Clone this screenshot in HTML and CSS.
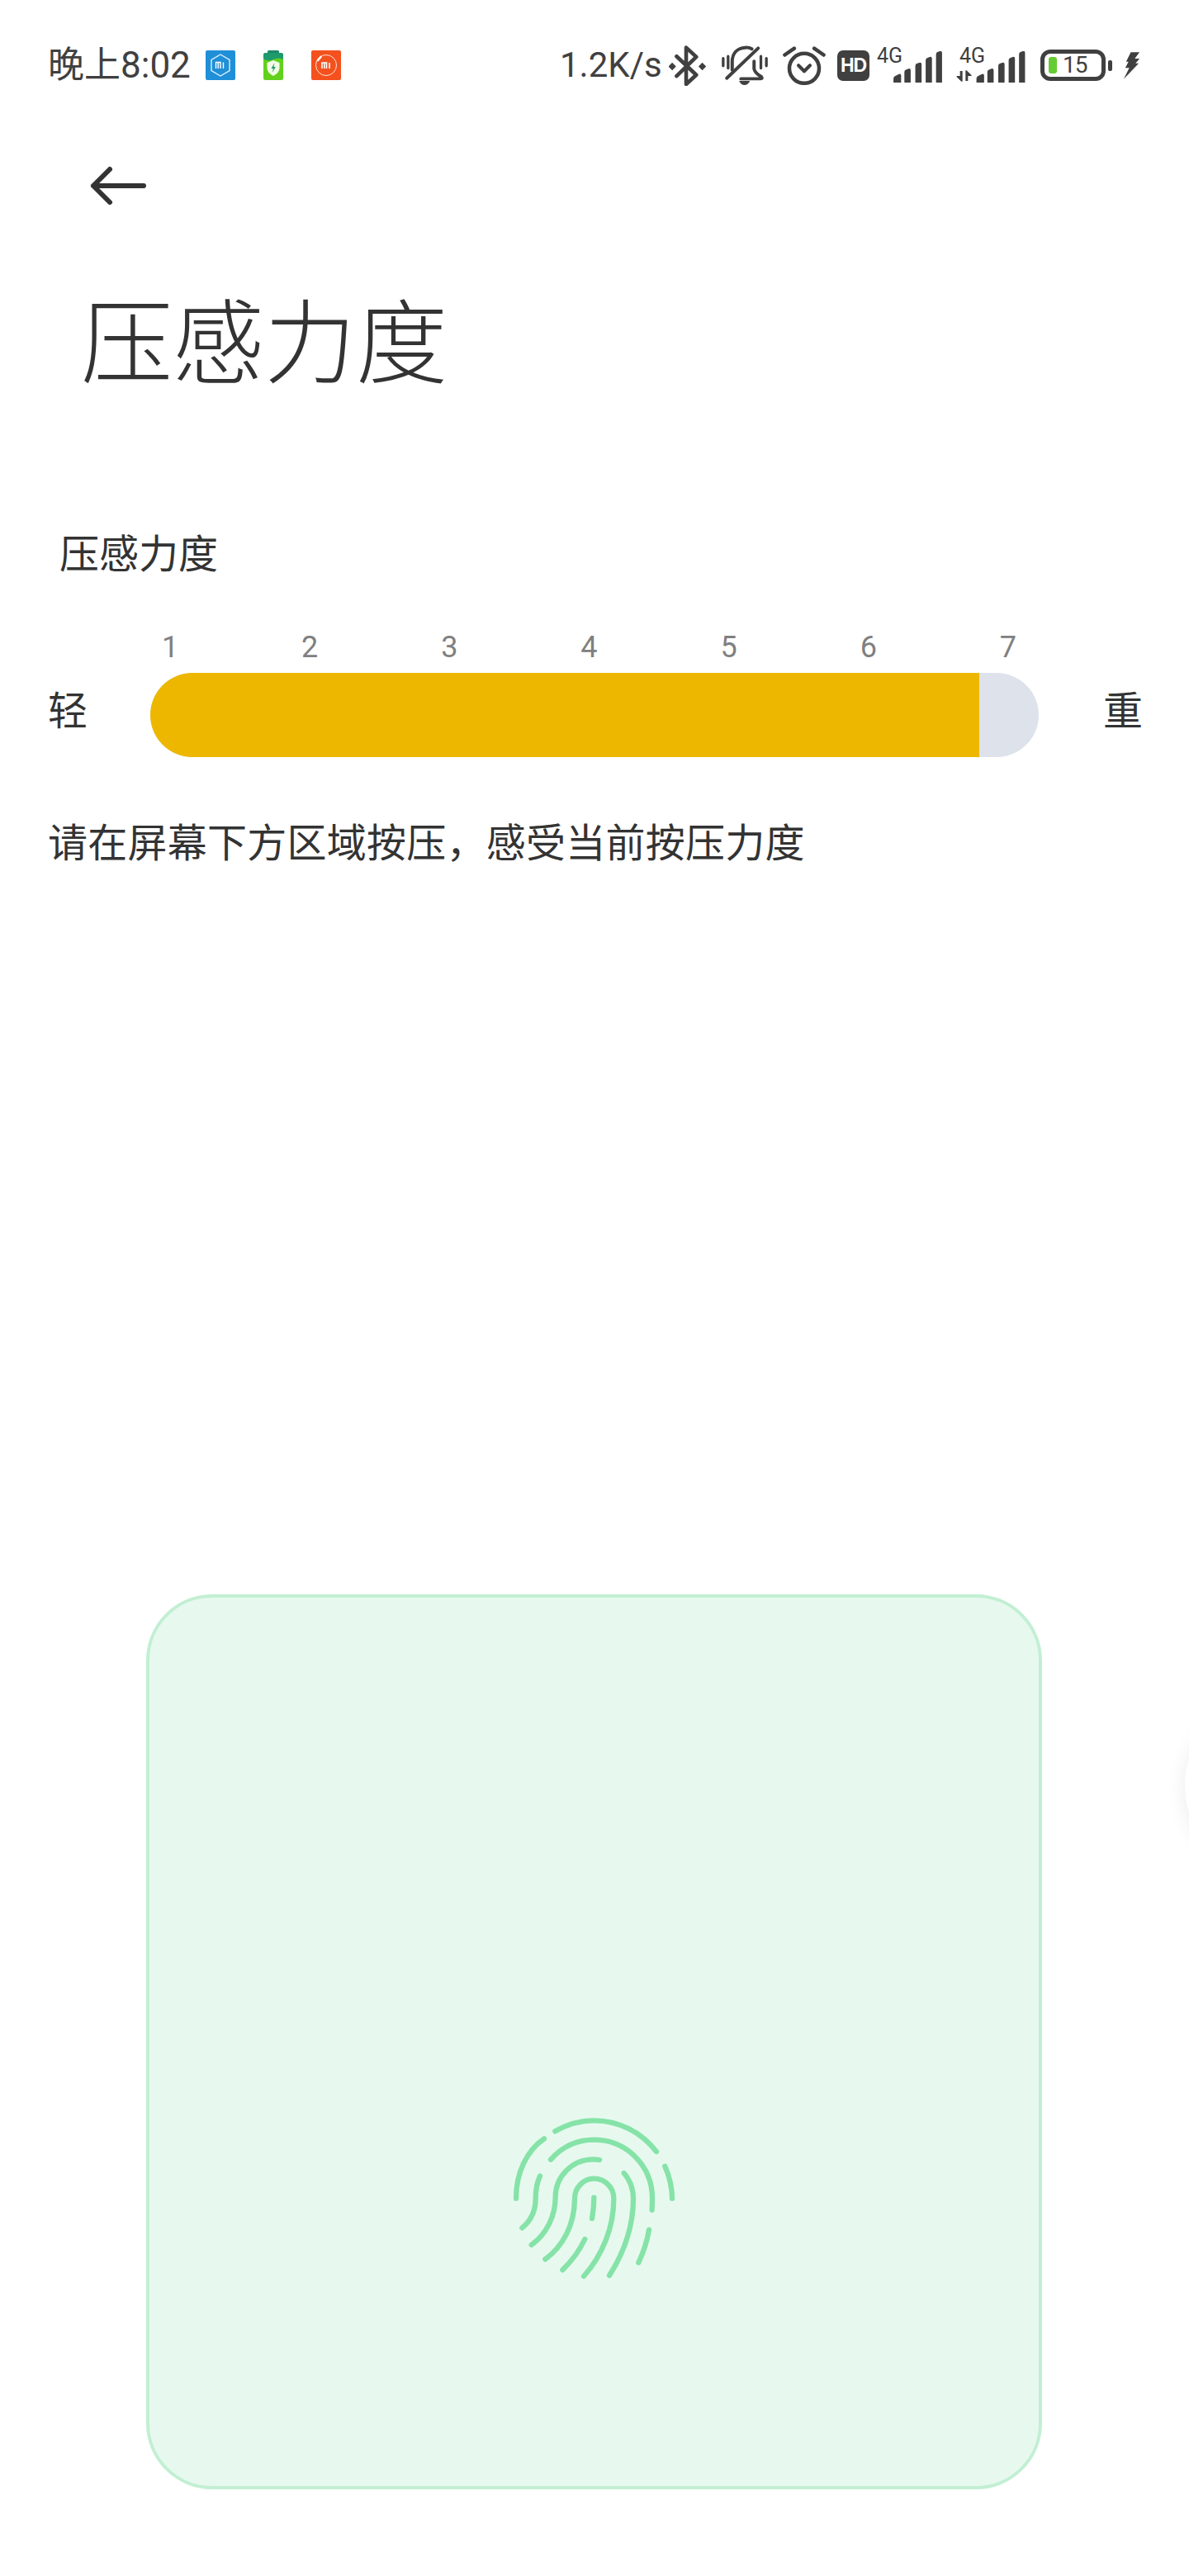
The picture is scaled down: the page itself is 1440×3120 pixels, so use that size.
FILE: index.html
```html
<!DOCTYPE html>
<html>

<head>
    <meta charset="UTF-8" />
    <title>压感力度</title>
    <link rel="stylesheet" href="styles.css">
</head>

<body>
    <div class="page">
        <!-- 状态栏 -->
        <div class="status">
            <div class="status-left">
                <span class="time">晚上8:02</span>
                <svg class="app-icon" viewBox="0 0 36 36">
                    <rect width="36" height="36" rx="2" fill="#1f8fd8" />
                    <path d="M18 5 L29 11.5 V24.5 L18 31 L7 24.5 V11.5 Z" fill="none" stroke="#dff1fb" stroke-width="1.4" />
                    <path d="M12.5 22 V14.5 H18 V22 M15.2 14.5 V22 M21.5 14.5 V22" fill="none" stroke="#fff" stroke-width="1.4" />
                </svg>
                <svg class="app-icon" viewBox="0 0 36 36">
                    <rect x="11" y="0" width="14" height="5" rx="1.5" fill="#1c8a6a" />
                    <rect x="6" y="3" width="24" height="33" rx="2.5" fill="#62d01c" />
                    <path d="M6 5.5 Q6 3 8.5 3 H27.5 Q30 3 30 5.5 V11 Q24 8 18 11 Q11 14 6 10 Z" fill="#1f9a6c" />
                    <path d="M18 12 L25.5 15 V21 Q25.5 27 18 31 Q10.5 27 10.5 21 V15 Z" fill="#f2fbe6" />
                    <path d="M19.5 15 L15.5 22 H18 L16.8 27 L20.8 20 H18.4 Z" fill="#1f9a6c" />
                </svg>
                <svg class="app-icon" viewBox="0 0 36 36">
                    <rect width="36" height="36" rx="2" fill="#f4511e" />
                    <circle cx="18" cy="18" r="12.5" fill="none" stroke="#fde3d8" stroke-width="1" />
                    <path d="M8 12 L11.5 8" stroke="#fff" stroke-width="2.6" stroke-linecap="round" />
                    <path d="M13 22 V15 H18.5 V22 M15.8 15 V22 M22 15 V22" fill="none" stroke="#fff" stroke-width="1.6" />
                </svg>
            </div>
            <div class="status-right">
                <span class="speed">1.2K/s</span>
                <svg class="ico-bt" viewBox="0 0 135 148">
                    <path d="M28 40 L100 108 L63 142 V8 L100 42 L28 112" fill="none" stroke="#404040" stroke-width="14" stroke-linejoin="round" stroke-linecap="round" />
                    <path d="M12 63 L26 77 L12 91 L-2 77 Z M122 63 L136 77 L122 91 L108 77 Z" fill="#404040" />
                </svg>
                <svg class="ico-bell" viewBox="0 0 168 145">
                    <path d="M38 90 V60 C38 30 55 10 85 8 Q100 7 110 13 M118 58 V85 Q120 100 145 115 Q150 122 142 122 H70" fill="none" stroke="#404040" stroke-width="12" stroke-linecap="round" />
                    <path d="M18 120 L133 10" stroke="#404040" stroke-width="12" stroke-linecap="round" />
                    <path d="M5 47 V75 M23 40 V83 M143 40 V83 M163 47 V75" stroke="#404040" stroke-width="10" stroke-linecap="round" />
                    <path d="M63 130 H103 Q96 145 83 145 Q70 145 63 130 Z" fill="#404040" />
                </svg>
                <svg class="ico-alarm" viewBox="0 0 150 135">
                    <circle cx="75" cy="77" r="52" fill="none" stroke="#404040" stroke-width="13" />
                    <path d="M55 67 L75 87 L95 67" fill="none" stroke="#404040" stroke-width="12" stroke-linecap="round" stroke-linejoin="round" />
                    <path d="M7 30 L40 7 M143 30 L110 7" stroke="#404040" stroke-width="13" stroke-linecap="round" />
                </svg>
                <span class="hd">HD</span>
                <div class="signal">
                    <span class="net">4G</span>
                    <svg class="bars" viewBox="0 0 178 115">
                        <path d="M0 115 V100 Q0 93 8 90 L20 84 Q28 81 28 89 V115 Z M40 115 V76 Q40 69 47 67 L55 64 Q63 62 63 70 V115 Z M80 115 V54 Q80 47 87 45 L95 42 Q103 40 103 48 V115 Z M118 115 V33 Q118 26 125 24 L133 21 Q141 19 141 27 V115 Z M156 115 V11 Q156 4 163 2 L170 0 Q178 -2 178 6 V115 Z" fill="#404040" />
                    </svg>
                </div>
                <div class="signal signal-data">
                    <span class="net">4G</span>
                    <svg class="bars" viewBox="0 0 178 115">
                        <path d="M0 115 V100 Q0 93 8 90 L20 84 Q28 81 28 89 V115 Z M40 115 V76 Q40 69 47 67 L55 64 Q63 62 63 70 V115 Z M80 115 V54 Q80 47 87 45 L95 42 Q103 40 103 48 V115 Z M118 115 V33 Q118 26 125 24 L133 21 Q141 19 141 27 V115 Z M156 115 V11 Q156 4 163 2 L170 0 Q178 -2 178 6 V115 Z" fill="#404040" />
                    </svg>
                    <svg class="arrows" viewBox="0 0 60 40">
                        <path d="M14 2 H23 V40 H19 L2 24 Q0 20 4 20 H14 Z M34 38 V0 H38 L55 16 Q58 20 54 20 H43 V38 Z" fill="#404040" />
                    </svg>
                </div>
                <div class="battery">
                    <span class="battery-level"></span>
                    <span class="battery-num">15</span>
                </div>
                <span class="battery-cap"></span>
                <svg class="ico-bolt" viewBox="0 0 22 36">
                    <path d="M10 1 H21 L15 9 H21 L16 15 H20 L1 35 L8 21 H3 L7 13 H4 Z" fill="#404040" />
                </svg>
            </div>
        </div>

        <!-- 返回 -->
        <div class="back">
            <svg class="back-arrow" viewBox="0 0 70 50">
                <path d="M5 25 H66 M25 5 L5 25 L25 45" fill="none" stroke="#333" stroke-width="6" stroke-linecap="round" stroke-linejoin="round" />
            </svg>
        </div>

        <h1 class="title">压感力度</h1>

        <div class="label">压感力度</div>

        <div class="ticks">
            <span>1</span>
            <span>2</span>
            <span>3</span>
            <span>4</span>
            <span>5</span>
            <span>6</span>
            <span>7</span>
        </div>

        <div class="level">
            <span class="level-text">轻</span>
            <div class="track">
                <div class="track-fill"></div>
            </div>
            <span class="level-text">重</span>
        </div>

        <p class="tip">请在屏幕下方区域按压，感受当前按压力度</p>

        <div class="press-area">
            <svg class="finger" viewBox="0 0 780 780">
                <path d="M247 121 C 290 96 340 82 388 82 C 480 82 560 125 615 195" />
                <path d="M207 148 C 145 190 105 270 105 365" />
                <path d="M646 248 C 662 285 672 325 672 365" />
                <path d="M231 224 C 270 180 325 152 388 152 C 505 152 600 245 600 365 L 599 407" />
                <path d="M408 225 C 400 223 395 223 385 223 C 310 223 248 285 248 360 C 248 430 215 495 161 534" />
                <path d="M192 284 C 180 310 176 335 176 365 C 176 405 160 445 127 472" />
                <path d="M211 586 C 275 540 318 460 318 365 C 318 325 350 293 388 293 C 428 293 460 325 460 365 C 460 470 420 570 351 648" />
                <path d="M388 362 C 388 385 386 410 381 438" />
                <path d="M355 513 C 335 555 308 592 274 625" />
                <path d="M497 273 C 520 300 531 330 531 365 C 531 465 498 560 444 645" />
                <path d="M588 479 C 581 520 568 560 550 598" />
            </svg>
        </div>

        <!-- 右边的悬浮球 -->
        <div class="side-ball"></div>
    </div>
</body>

</html>
```

FILE: styles.css
```css
*{
    margin: 0;
    padding: 0;
    box-sizing: border-box;
}

body{
    background-color: #fff;
    font-family: "Noto Sans CJK SC", "Noto Sans", sans-serif;
    color: #333;
}

.page{
    width: 1440px;
    height: 3120px;
    position: relative;
    overflow: hidden;
}

/* 状态栏 */
.status{
    height: 156px;
    padding: 49px 59px 0 58px;
    display: flex;
    justify-content: space-between;
    align-items: flex-start;
    color: #404040;
}

.status-left{
    display: flex;
    align-items: center;
    height: 60px;
}

.time{
    font-family: Roboto, "Noto Sans CJK SC", sans-serif;
    font-size: 44px;
    line-height: 60px;
    width: 191px;
}

.app-icon{
    width: 36px;
    height: 36px;
    margin-right: 28px;
}

.status-right{
    display: flex;
    align-items: center;
    height: 60px;
}

.speed{
    font-family: Roboto, sans-serif;
    font-size: 42px;
    line-height: 60px;
    width: 122px;
    white-space: nowrap;
    margin-right: 10px;
}

.ico-bt{
    width: 45px;
    height: 49px;
    margin-right: 19px;
}

.ico-bell{
    width: 56px;
    height: 48px;
    margin-right: 18px;
}

.ico-alarm{
    width: 52px;
    height: 47px;
    margin-right: 14px;
}

.hd{
    width: 39px;
    height: 37px;
    border-radius: 7px;
    background-color: #404040;
    color: #fff;
    font-family: "Liberation Sans", sans-serif;
    font-size: 23px;
    font-weight: bold;
    letter-spacing: -1px;
    line-height: 37px;
    text-align: center;
    margin-right: 9px;
}

.signal{
    width: 79px;
    height: 41px;
    position: relative;
}

.signal-data{
    width: 84px;
    margin-left: 17px;
}

.net{
    position: absolute;
    left: 0;
    top: -5px;
    font-family: Roboto, sans-serif;
    font-size: 25px;
    line-height: 28px;
}

.signal-data .net{
    left: 4px;
}

.bars{
    position: absolute;
    left: 20px;
    bottom: 0;
    width: 59px;
    height: 38px;
}

.signal-data .bars{
    left: 24px;
    width: 60px;
}

.signal-data .arrows{
    position: absolute;
    left: 0;
    bottom: 1px;
    width: 20px;
    height: 14px;
}

.battery{
    width: 79px;
    height: 38px;
    border: 5px solid #404040;
    border-radius: 12px;
    margin-left: 18px;
    padding-left: 5px;
    display: flex;
    align-items: center;
    gap: 7px;
}

.battery-level{
    width: 10px;
    height: 20px;
    border-radius: 3px;
    background-color: #66cc33;
}

.battery-num{
    font-family: Roboto, sans-serif;
    font-size: 28px;
    letter-spacing: -1px;
    line-height: 28px;
}

.battery-cap{
    width: 5px;
    height: 13px;
    border-radius: 2px;
    background-color: #404040;
    margin-left: 3px;
}

.ico-bolt{
    width: 21px;
    height: 35px;
    margin-left: 13px;
}

/* 返回 */
.back{
    padding-left: 108px;
    height: 50px;
    margin-top: 44px;
}

.back-arrow{
    display: block;
    width: 70px;
    height: 50px;
}

.title{
    font-size: 111px;
    font-weight: 300;
    line-height: 150px;
    color: #333;
    margin-top: 83px;
    padding-left: 98px;
}

.label{
    font-size: 48px;
    line-height: 68px;
    margin-top: 150px;
    padding-left: 72px;
}

.ticks{
    display: flex;
    justify-content: space-between;
    padding: 0 199px 0 186px;
    margin-top: 61px;
    color: #808080;
    font-family: Roboto, sans-serif;
    font-size: 36px;
    line-height: 44px;
}

.ticks span{
    width: 40px;
    text-align: center;
}

.level{
    display: flex;
    align-items: center;
    padding: 0 58px;
    margin-top: 9px;
}

.level-text{
    width: 48px;
    font-size: 48px;
    line-height: 60px;
    margin-top: -18px;
}

.track{
    flex: 0 0 1076px;
    height: 102px;
    margin: 0 78px 0 76px;
    border-radius: 51px;
    background-color: #dde2eb;
    overflow: hidden;
}

.track-fill{
    width: 1004px;
    height: 100%;
    background-color: #edb700;
}

.tip{
    font-size: 48px;
    letter-spacing: 0.25px;
    line-height: 68px;
    margin-top: 66px;
    padding-left: 58px;
}

/* 按压区域 */
.press-area{
    width: 1085px;
    height: 1084px;
    margin: 880px 0 0 177px;
    border: 4px solid #c2efd3;
    border-radius: 80px;
    background-color: #e7f9ef;
    display: flex;
    justify-content: center;
    padding-top: 606px;
}

.finger{
    width: 260px;
    height: 260px;
    fill: none;
    stroke: #86e3a8;
    stroke-width: 19;
    stroke-linecap: round;
    stroke-linejoin: round;
}

.side-ball{
    position: absolute;
    left: 1435px;
    top: 2053px;
    width: 220px;
    height: 220px;
    border-radius: 50%;
    background-color: #fff;
    box-shadow: 0 4px 24px rgba(0, 0, 0, 0.08);
}
```
